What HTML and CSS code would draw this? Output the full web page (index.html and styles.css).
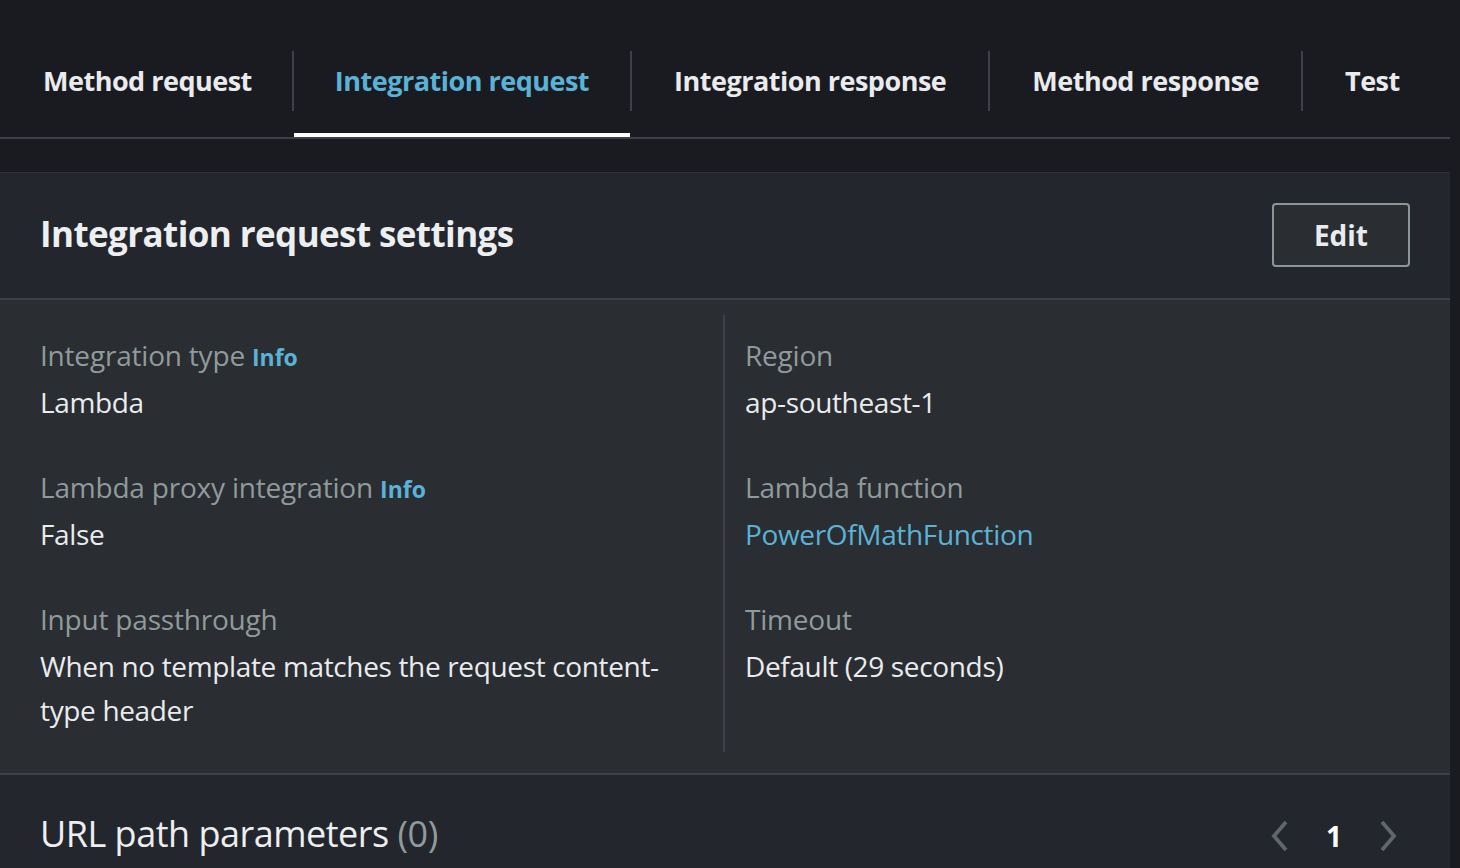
FILE: index.html
```html
<!DOCTYPE html>
<html lang="en">
<head>
<meta charset="utf-8">
<title>Integration request</title>
<link rel="stylesheet" href="styles.css">
</head>
<body>
<div class="page">
  <nav class="tabs">
    <div class="tab first">Method request</div>
    <span class="sep"></span>
    <div class="tab active">Integration request</div>
    <span class="sep"></span>
    <div class="tab">Integration response</div>
    <span class="sep"></span>
    <div class="tab">Method response</div>
    <span class="sep"></span>
    <div class="tab">Test</div>
  </nav>

  <section class="card">
    <header class="card-header">
      <h2 class="title">Integration request settings</h2>
      <button class="btn">Edit</button>
    </header>
    <div class="card-body">
      <div class="col">
        <div class="kv">
          <div class="label">Integration type <span class="info">Info</span></div>
          <div class="value">Lambda</div>
        </div>
        <div class="kv">
          <div class="label">Lambda proxy integration <span class="info">Info</span></div>
          <div class="value">False</div>
        </div>
        <div class="kv">
          <div class="label">Input passthrough</div>
          <div class="value">When no template matches the request content-type header</div>
        </div>
      </div>
      <div class="col col-right">
        <div class="kv">
          <div class="label">Region</div>
          <div class="value">ap-southeast-1</div>
        </div>
        <div class="kv">
          <div class="label">Lambda function</div>
          <div class="value"><span class="link">PowerOfMathFunction</span></div>
        </div>
        <div class="kv">
          <div class="label">Timeout</div>
          <div class="value">Default (29 seconds)</div>
        </div>
      </div>
    </div>
  </section>

  <section class="card card-params">
    <header class="params-header">
      <h2 class="params-title">URL path parameters <span class="count">(0)</span></h2>
      <div class="pager">
        <svg class="chev" width="20" height="32" viewBox="0 0 20 32" aria-hidden="true"><path d="M16 2 L4 16 L16 30" fill="none" stroke="#5f6670" stroke-width="3.8"/></svg>
        <span class="page-num">1</span>
        <svg class="chev" width="20" height="32" viewBox="0 0 20 32" aria-hidden="true"><path d="M4 2 L16 16 L4 30" fill="none" stroke="#5f6670" stroke-width="3.8"/></svg>
      </div>
    </header>
  </section>
</div>
</body>
</html>
```

FILE: styles.css
```css
* { box-sizing: border-box; }

html, body {
  margin: 0;
  padding: 0;
  background: #1a1b20;
  height: 100%;
  overflow: hidden;
}

body {
  font-family: "Open Sans", "Noto Sans", sans-serif;
  color: #e9ebed;
}

.page {
  width: 1450px;
}

/* Tabs */
.tabs {
  display: flex;
  align-items: flex-start;
  padding-top: 25px;
  border-bottom: 2px solid #3d4048;
}

.tab {
  height: 112px;
  padding: 2px 42px 0;
  display: flex;
  align-items: center;
  font-size: 27px;
  letter-spacing: -0.5px;
  font-weight: 700;
  color: #e9ebed;
  border-bottom: 4px solid transparent;
  white-space: nowrap;
}

.tab.first { padding-left: 43px; padding-right: 40px; }

.tab.active {
  color: #5ab3d6;
  border-bottom-color: #ffffff;
  padding-left: 41px;
  padding-right: 41px;
}

.sep {
  width: 2px;
  height: 60px;
  margin-top: 26px;
  background: #3d4048;
  flex: none;
}

/* Card */
.card {
  margin-top: 33px;
  border-top: 1px solid #2c2f36;
}

.card-header {
  height: 127px;
  padding: 0 40px;
  display: flex;
  align-items: center;
  justify-content: space-between;
  background: #23262d;
  border-bottom: 2px solid #3d4048;
}

.title {
  margin: 0 0 4px;
  font-size: 35px;
  letter-spacing: -0.6px;
  line-height: 44px;
  font-weight: 700;
  color: #eceef0;
}

.btn {
  font-family: inherit;
  font-size: 28px;
  font-weight: 700;
  line-height: 44px;
  color: #e9ebed;
  background: #2a2e33;
  border: 2px solid #8d9696;
  border-radius: 4px;
  padding: 8px 40px;
  margin-bottom: 1px;
}

.card-body {
  display: grid;
  grid-template-columns: 723px 1fr;
  padding: 15px 0 21px;
  background: #2a2d32;
  border-bottom: 2px solid #3d4048;
}

.col {
  display: flex;
  flex-direction: column;
  gap: 41px;
  padding: 18px 40px 20px;
}

.col-right {
  border-left: 2px solid #3d4048;
  padding-left: 20px;
}

.kv {
  display: flex;
  flex-direction: column;
  gap: 3px;
}

.label {
  font-size: 28px;
  letter-spacing: -0.2px;
  line-height: 44px;
  color: #8f9b9b;
}

.info {
  font-size: 23px;
  line-height: 1;
  letter-spacing: 0;
  font-weight: 700;
  color: #5ab3d6;
}

.value {
  font-size: 28px;
  letter-spacing: -0.35px;
  line-height: 44px;
  color: #e9ebed;
}

.link { color: #5ab3d6; }

/* Params */
.card-params {
  margin-top: 0;
  border-top: 0;
}

.params-header {
  height: 100px;
  display: flex;
  align-items: flex-start;
  justify-content: space-between;
  padding: 37px 52px 0 40px;
  background: #23262d;
}

.params-title {
  margin: 0;
  font-size: 36px;
  letter-spacing: -0.5px;
  line-height: 44px;
  font-weight: 400;
  color: #eceef0;
}

.count { color: #8f9b9b; }

.pager {
  display: flex;
  align-items: center;
  gap: 36px;
  height: 48px;
}

.page-num {
  font-size: 28px;
  font-weight: 700;
  color: #ffffff;
}
```
